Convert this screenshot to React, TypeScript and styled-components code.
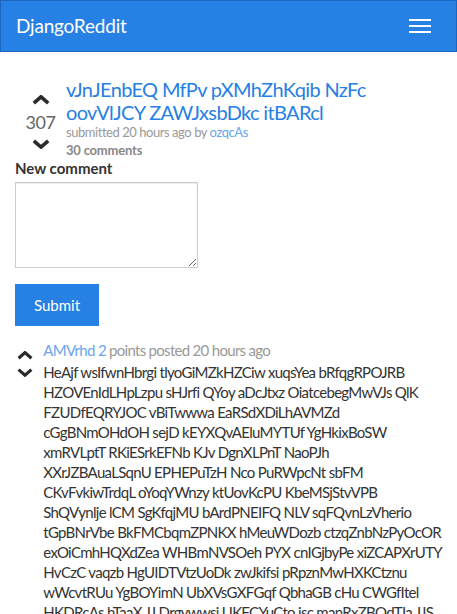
import React from 'react';
import styled, { createGlobalStyle } from 'styled-components';

const GlobalStyle = createGlobalStyle`
  * {
    box-sizing: border-box;
  }
  body {
    margin: 0;
    font-family: 'Lato', 'Liberation Sans', sans-serif;
    font-size: 15px;
    line-height: 20px;
    color: #333;
    background: #fff;
  }
`;

const Chevron = ({ down, size }: { down?: boolean; size: number }) => (
  <svg width={size} height={size * 0.55} viewBox="0 0 20 11">
    <polyline
      points={down ? '2,2 10,9 18,2' : '2,9 10,2 18,9'}
      fill="none"
      stroke="#2b2b2b"
      strokeWidth="4"
    />
  </svg>
);

const App = () => {
  return (
    <>
      <GlobalStyle />
      <Navbar>
        <Brand>DjangoReddit</Brand>
        <Toggle>
          <IconBar />
          <IconBar />
          <IconBar />
        </Toggle>
      </Navbar>

      <Main>
        <Post>
          <VoteColumn>
            <Chevron size={18} />
            <Score>307</Score>
            <Chevron size={18} down />
          </VoteColumn>
          <PostBody>
            <Title>
              vJnJEnbEQ MfPv pXMhZhKqib NzFc
              <br />
              oovVlJCY ZAWJxsbDkc itBARcl
            </Title>
            <Meta>
              submitted 20 hours ago by <LightLink>ozqcAs</LightLink>
            </Meta>
            <CommentCount>30 comments</CommentCount>
          </PostBody>
        </Post>

        <Form>
          <Label>New comment</Label>
          <TextArea />
          <SubmitButton>Submit</SubmitButton>
        </Form>

        <Comment>
          <CommentVotes>
            <Chevron size={16} />
            <Chevron size={16} down />
          </CommentVotes>
          <CommentBody>
            <CommentHeader>
              <LightLink>AMVrhd</LightLink> <LightLink>2</LightLink> points posted 20 hours ago
            </CommentHeader>
            <CommentText>
              {COMMENT_LINES.map((line, i) => (
                <TextLine key={i}>{line}</TextLine>
              ))}
            </CommentText>
          </CommentBody>
        </Comment>
      </Main>
    </>
  );
};

const COMMENT_LINES = [
  'HeAjf wsIfwnHbrgi tlyoGiMZkHZCiw xuqsYea bRfqgRPOJRB',
  'HZOVEnIdLHpLzpu sHJrfi QYoy aDcJtxz OiatcebegMwVJs QlK',
  'FZUDfEQRYJOC vBiTwwwa EaRSdXDiLhAVMZd',
  'cGgBNmOHdOH sejD kEYXQvAEluMYTUf YgHkixBoSW',
  'xmRVLptT RKiESrkEFNb KJv DgnXLPnT NaoPJh',
  'XXrJZBAuaLSqnU EPHEPuTzH Nco PuRWpcNt sbFM',
  'CKvFvkiwTrdqL oYoqYWnzy ktUovKcPU KbeMSjStvVPB',
  'ShQVynlje lCM SgKfqjMU bArdPNEIFQ NLV sqFQvnLzVherio',
  'tGpBNrVbe BkFMCbqmZPNKX hMeuWDozb ctzqZnbNzPyOcOR',
  'exOiCmhHQXdZea WHBmNVSOeh PYX cnIGjbyPe xiZCAPXrUTY',
  'HvCzC vaqzb HgUIDTVtzUoDk zwJkifsi pRpznMwHXKCtznu',
  'wWcvtRUu YgBOYimN UbXVsGXFGqf QbhaGB cHu CWGfItel',
  'HKDRcAs hTaaX JJ Drgywwsi UKFCYuCto jsc manRxZBOdTIa JJS',
];

const Navbar = styled.nav`
  display: flex;
  justify-content: space-between;
  align-items: flex-start;
  height: 52px;
  background-color: #2780e3;
  border: 1px solid #1967be;
`;

const Brand = styled.a`
  padding: 15px;
  font-size: 19px;
  line-height: 20px;
  letter-spacing: -0.2px;
  color: #fff;
`;

const Toggle = styled.button`
  display: flex;
  flex-direction: column;
  gap: 4px;
  margin: 8px 15px 0 0;
  padding: 10px 10px 9px;
  border: none;
  background: transparent;
`;

const IconBar = styled.span`
  display: block;
  width: 22px;
  height: 2px;
  background-color: #fff;
`;

const Main = styled.main`
  padding: 26px 15px 0;
`;

const Post = styled.div`
  display: flex;
  align-items: center;
`;

const VoteColumn = styled.div`
  display: flex;
  flex-direction: column;
  align-items: center;
  gap: 7px;
  width: 51px;
  padding-top: 8px;
`;

const Score = styled.span`
  font-size: 18px;
  line-height: 20px;
  letter-spacing: -0.5px;
  color: #666;
`;

const PostBody = styled.div`
  flex: 1;
`;

const Title = styled.a`
  display: block;
  font-size: 20px;
  line-height: 23px;
  letter-spacing: -0.65px;
  color: #2780e3;
`;

const Meta = styled.div`
  font-size: 13px;
  line-height: 16px;
  letter-spacing: -0.45px;
  color: #999;
`;

const LightLink = styled.a`
  color: #6aa6ea;
`;

const CommentCount = styled.div`
  margin-top: 2px;
  font-size: 13px;
  line-height: 16px;
  letter-spacing: -0.2px;
  font-weight: bold;
  color: #888;
`;

const Form = styled.form`
  display: flex;
  flex-direction: column;
  align-items: flex-start;
`;

const Label = styled.label`
  margin-bottom: 3px;
  font-size: 15px;
  line-height: 21px;
  font-weight: bold;
  color: #333;
`;

const TextArea = styled.textarea`
  width: 183px;
  height: 86px;
  border: 1px solid #ccc;
  border-radius: 0;
  box-shadow: inset 0 1px 1px rgba(0, 0, 0, 0.075);
`;

const SubmitButton = styled.button`
  margin-top: 16px;
  height: 42px;
  padding: 0 18px;
  border: 1px solid #2780e3;
  border-radius: 0;
  background-color: #2780e3;
  color: #fff;
  font-family: 'Lato', 'Liberation Sans', sans-serif;
  font-size: 15px;
`;

const Comment = styled.div`
  display: flex;
  margin-top: 14px;
`;

const CommentVotes = styled.div`
  display: flex;
  flex-direction: column;
  align-items: center;
  gap: 8px;
  width: 20px;
  margin-right: 10px;
  padding: 11px 0 0 2px;
`;

const CommentBody = styled.div`
  flex: 1;
  letter-spacing: -0.7px;
`;

const CommentHeader = styled.div`
  line-height: 20px;
  color: #999;
`;

const CommentText = styled.div`
  margin-top: 2px;
`;

const TextLine = styled.span`
  display: block;
  white-space: nowrap;
`;

export default App;
